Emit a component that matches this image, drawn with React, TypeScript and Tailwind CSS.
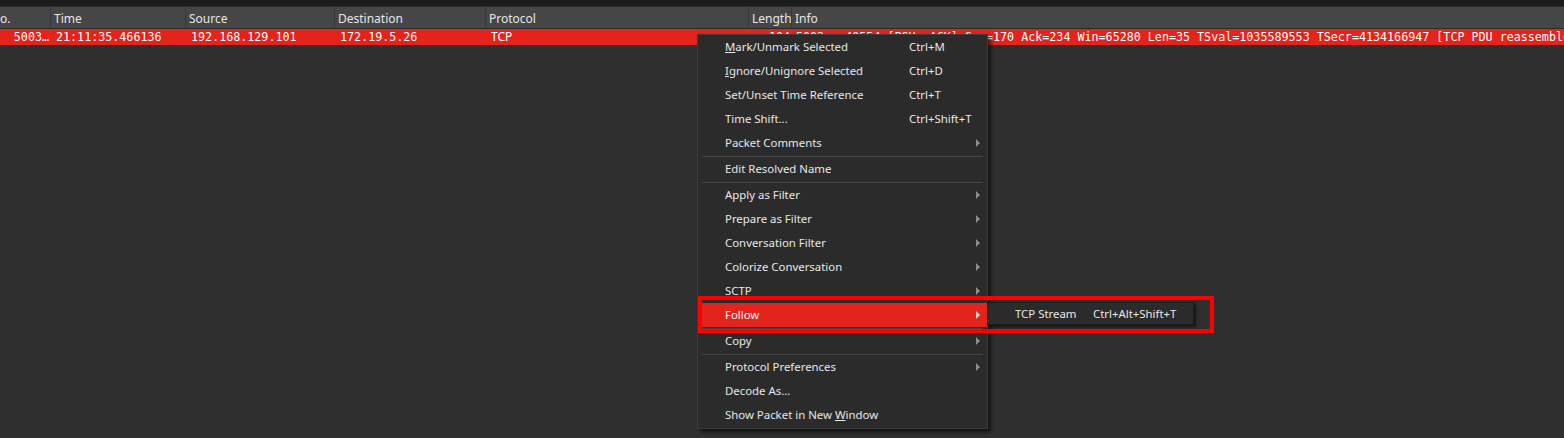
import React from "react";

const sans = { fontFamily: '"Noto Sans", "Open Sans", Arial, sans-serif' };
const mono = { fontFamily: '"DejaVu Sans Mono", "Liberation Mono", monospace' };

type Item =
  | { sep: true }
  | { label: React.ReactNode; shortcut?: string; sub?: boolean; active?: boolean };

const items: Item[] = [
  { label: <><u>M</u>ark/Unmark Selected</>, shortcut: "Ctrl+M" },
  { label: <><u>I</u>gnore/Unignore Selected</>, shortcut: "Ctrl+D" },
  { label: "Set/Unset Time Reference", shortcut: "Ctrl+T" },
  { label: "Time Shift...", shortcut: "Ctrl+Shift+T" },
  { label: "Packet Comments", sub: true },
  { sep: true },
  { label: "Edit Resolved Name" },
  { sep: true },
  { label: "Apply as Filter", sub: true },
  { label: "Prepare as Filter", sub: true },
  { label: "Conversation Filter", sub: true },
  { label: "Colorize Conversation", sub: true },
  { label: "SCTP", sub: true },
  { label: "Follow", sub: true, active: true },
  { sep: true },
  { label: "Copy", sub: true },
  { sep: true },
  { label: "Protocol Preferences", sub: true },
  { label: "Decode As..." },
  { label: <>Show Packet in New <u>W</u>indow</> },
];

function Arrow({ light }: { light?: boolean }) {
  return (
    <svg width="4" height="8" viewBox="0 0 4 8" className="absolute right-[7px] top-[8px]">
      <path d="M0 0 L4 4 L0 8 Z" fill={light ? "#f2d0ce" : "#8c8c8c"} />
    </svg>
  );
}

export default function App() {
  const cols = [
    { w: "w-[51px]", h: "o.", v: "5003…", right: true, monoCell: true },
    { w: "w-[135px]", h: "Time", v: "21:11:35.466136", monoCell: true },
    { w: "w-[149px]", h: "Source", v: "192.168.129.101", monoCell: true },
    { w: "w-[151px]", h: "Destination", v: "172.19.5.26", monoCell: true },
    { w: "w-[263px]", h: "Protocol", v: "TCP", monoCell: false },
    { w: "w-[43px]", h: "Length", v: "104", right: true, monoCell: true },
  ];
  return (
    <div className="relative w-[1564px] h-[438px] overflow-hidden bg-[#2f2f2f] text-[#e8e8e8]" style={sans}>
      <div className="h-[6px] bg-[#1b1b1b]" />
      <div className="h-[1px] bg-[#2c2c2c]" />
      {/* header */}
      <div className="flex h-[22px] bg-[#464646] border-b border-[#2a2a2a] text-[12px] leading-[23px] text-[#e6e6e6]">
        {cols.map((c, i) => (
          <div key={i} className={`${c.w} shrink-0 border-r border-[#383838] ${i === 0 ? "pl-0" : "pl-[3px]"} whitespace-nowrap overflow-hidden`}>
            {c.h}
          </div>
        ))}
        <div className="flex-1 pl-[3px]">Info</div>
      </div>
      {/* packet row */}
      <div className="flex h-[16px] bg-[#e2241c] text-white leading-[16px]">
        {cols.map((c, i) => (
          <div
            key={i}
            className={`${c.w} shrink-0 whitespace-nowrap overflow-hidden ${c.right ? "text-right pr-[2px]" : "pl-[5px]"} ${c.monoCell ? "text-[11.7px]" : "text-[12px]"}`}
            style={c.monoCell ? mono : sans}
          >
            {c.v}
          </div>
        ))}
        <div className="flex-1 pl-[4px] whitespace-nowrap overflow-hidden text-[11.7px]" style={mono}>
          5003 → 40554 [PSH, ACK] Seq=170 Ack=234 Win=65280 Len=35 TSval=1035589553 TSecr=4134166947 [TCP PDU reassembled in 50034]
        </div>
      </div>

      {/* context menu */}
      <div className="absolute left-[697px] top-[34px] w-[291px] bg-[#2b2b2b] border border-[#3c3c3c] shadow-[3px_3px_4px_rgba(0,0,0,0.6)] pb-[1px] text-[11.4px]">
        {items.map((it, i) =>
          "sep" in it ? (
            <div key={i} className="h-[2px] flex items-center px-[4px]">
              <div className="h-[1px] w-full bg-[#454545]" />
            </div>
          ) : (
            <div
              key={i}
              className={`relative flex items-center h-[24px] pl-[27px] whitespace-nowrap ${it.active ? "bg-[#e2241c] text-white" : "text-[#e8e8e8]"}`}
            >
              <span className="w-[184px]">{it.label}</span>
              {it.shortcut && <span>{it.shortcut}</span>}
              {it.sub && <Arrow light={it.active} />}
            </div>
          )
        )}
      </div>

      {/* submenu */}
      <div className="absolute left-[987px] top-[302px] w-[207px] h-[23px] bg-[#2b2b2b] border border-[#1c1c1c] shadow-[2px_2px_3px_rgba(0,0,0,0.6)] flex items-center pl-[27px] text-[11.4px] text-[#e8e8e8] whitespace-nowrap">
        <span className="w-[78px]">TCP Stream</span>
        <span>Ctrl+Alt+Shift+T</span>
      </div>

      {/* annotation box */}
      <div className="absolute left-[698px] top-[296px] w-[516px] h-[37px] border-[4px] border-[#ff0000] pointer-events-none" />
    </div>
  );
}
